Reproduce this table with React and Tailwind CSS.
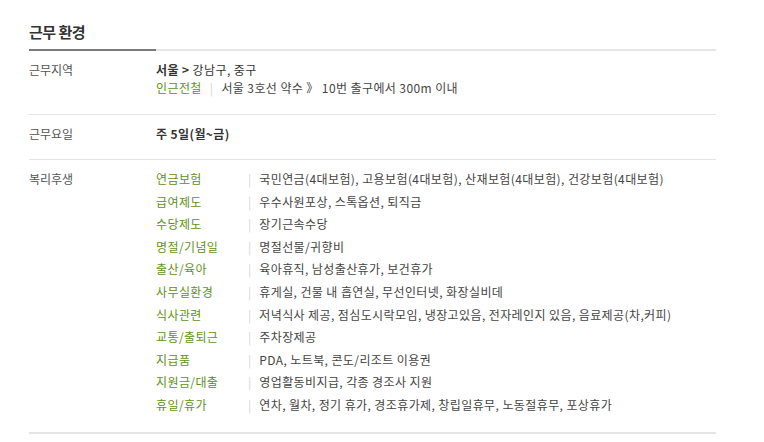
import React from 'react';

const benefits = [
  ['연금보험', '국민연금(4대보험), 고용보험(4대보험), 산재보험(4대보험), 건강보험(4대보험)'],
  ['급여제도', '우수사원포상, 스톡옵션, 퇴직금'],
  ['수당제도', '장기근속수당'],
  ['명절/기념일', '명절선물/귀향비'],
  ['출산/육아', '육아휴직, 남성출산휴가, 보건휴가'],
  ['사무실환경', '휴게실, 건물 내 흡연실, 무선인터넷, 화장실비데'],
  ['식사관련', '저녁식사 제공, 점심도시락모임, 냉장고있음, 전자레인지 있음, 음료제공(차,커피)'],
  ['교통/출퇴근', '주차장제공'],
  ['지급품', 'PDA, 노트북, 콘도/리조트 이용권'],
  ['지원금/대출', '영업활동비지급, 각종 경조사 지원'],
  ['휴일/휴가', '연차, 월차, 정기 휴가, 경조휴가제, 창립일휴무, 노동절휴무, 포상휴가'],
];

const Sep = () => <span className="text-[#d4d4d4] px-[8px]">|</span>;

const App = () => {
  return (
    <div
      className="bg-white min-h-[442px] text-[12px] text-[#333]"
      style={{ fontFamily: '"Noto Sans CJK KR", "Noto Sans", sans-serif' }}
    >
      <div className="ml-[29px] w-[687px] pt-[21px]">
        <h2 className="text-[15px] font-bold text-[#333] leading-[22px] tracking-[-0.5px] pb-[6px]">근무 환경</h2>
        <div className="flex h-[2px]">
          <div className="w-[127px] bg-[#7a7a7a]"></div>
          <div className="flex-1 bg-[#e6e6e6]"></div>
        </div>

        {/* 근무지역 */}
        <div className="flex pt-[10px] pb-[17px] border-b border-[#e5e5e5] leading-[18px]">
          <div className="w-[127px] text-[#555]">근무지역</div>
          <div className="tracking-[0.4px]">
            <div className="font-bold text-[#333]">
              서울 &gt; <span className="font-normal">강남구, 중구</span>
            </div>
            <div className="text-[#444]">
              <span className="text-[#5e9319]">인근전철</span>
              <Sep />
              서울 3호선 약수 》 10번 출구에서 300m 이내
            </div>
          </div>
        </div>

        {/* 근무요일 */}
        <div className="flex pt-[10px] pb-[16px] border-b border-[#e5e5e5] leading-[18px]">
          <div className="w-[127px] text-[#555]">근무요일</div>
          <div className="font-bold text-[#333] tracking-[0.4px]">주 5일(월~금)</div>
        </div>

        {/* 복리후생 */}
        <div className="flex pt-[8px] pb-[15px] border-b-2 border-[#e5e5e5]">
          <div className="w-[127px] text-[#555] leading-[22.6px]">복리후생</div>
          <div className="flex-1">
            {benefits.map(([cat, val]) => (
              <div key={cat} className="flex leading-[22.6px]">
                <div className="w-[84px] text-[#5e9319] tracking-[0.4px]">{cat}</div>
                <Sep />
                <div className="text-[#444] tracking-[0.4px]">{val}</div>
              </div>
            ))}
          </div>
        </div>
      </div>
    </div>
  );
};

export default App;
